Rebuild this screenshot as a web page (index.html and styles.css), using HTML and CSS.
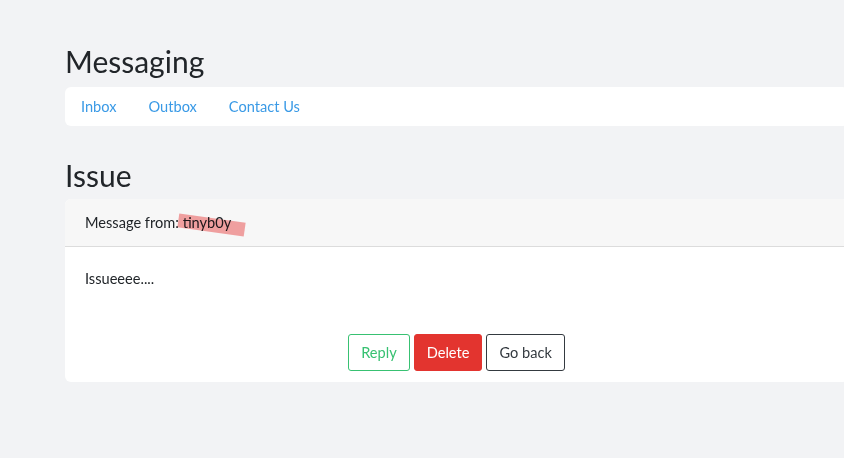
FILE: index.html
```html
<!DOCTYPE html>
<html>
<head>
<meta charset="utf-8">
<link rel="stylesheet" href="styles.css">
</head>
<body>
<main class="page">
  <h2 class="title">Messaging</h2>
  <nav class="nav-card">
    <a class="nav-link" href="#">Inbox</a>
    <a class="nav-link" href="#">Outbox</a>
    <a class="nav-link" href="#">Contact Us</a>
  </nav>
  <h2 class="title title-issue">Issue</h2>
  <section class="card">
    <div class="card-header">
      <span class="from">Message from: <span class="sender">tinyb0y<span class="redact"></span></span></span>
    </div>
    <div class="card-body">
      <p class="message">Issueeee....</p>
      <div class="actions">
        <button class="btn btn-reply">Reply</button>
        <button class="btn btn-delete">Delete</button>
        <button class="btn btn-back">Go back</button>
      </div>
    </div>
  </section>
</main>
</body>
</html>
```
FILE: styles.css
```css
* { box-sizing: border-box; }
html, body { margin: 0; padding: 0; }
body {
  background: #f2f3f5;
  font-family: "Lato", "Noto Sans", sans-serif;
  font-size: 14.6px;
  line-height: 1.6;
  color: #212529;
  overflow: hidden;
}
.page {
  padding: 44px 0 0 65px;
  width: 848px;
}
.title {
  margin: 0 0 9px 0;
  font-size: 30px;
  font-weight: 400;
  line-height: 34px;
  color: #212529;
}
.title-issue { margin-top: 32px; margin-bottom: 7px; }
.nav-card {
  background: #fff;
  border-radius: 6px;
  display: flex;
  height: 39px;
  align-items: center;
}
.nav-link {
  color: #3a9ae6;
  text-decoration: none;
  padding: 8px 16px;
}
.card {
  background: #fff;
  border-radius: 6px;
  overflow: hidden;
}
.card-header {
  background: #f7f7f7;
  border-bottom: 1px solid #dcdcdc;
  padding: 12px 20px;
  height: 48px;
}
.from { position: relative; }
.sender { position: relative; }
.redact {
  position: absolute;
  left: -5px;
  top: 4px;
  width: 67px;
  height: 14px;
  background: rgba(240, 90, 90, 0.55);
  transform: rotate(8deg);
  mix-blend-mode: multiply;
}
.card-body {
  padding: 20px 20px 11px;
}
.message { margin: 0 0 44px; }
.actions {
  display: flex;
  justify-content: center;
  gap: 4px;
}
.btn {
  font-family: inherit;
  font-size: 14.6px;
  line-height: 1.6;
  padding: 5px 12px;
  border-radius: 3px;
  border: 1px solid transparent;
  background: #fff;
  height: 37px;
}
.btn-reply { border-color: #38c172; color: #38c172; }
.btn-delete { background: #e3342f; border-color: #e3342f; color: #fff; }
.btn-back { border-color: #343a40; color: #343a40; }
```
